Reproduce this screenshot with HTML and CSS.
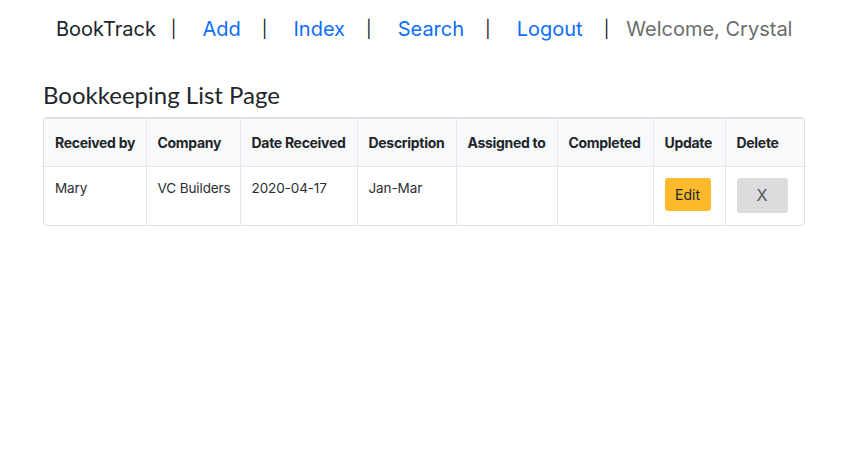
FILE: index.html
```html
<!DOCTYPE html>
<html>
<head>
<meta charset="utf-8">
<link rel="stylesheet" href="styles.css">
</head>
<body>
<nav class="nav">
  <span class="brand">BookTrack</span>
  <span class="sep sep-first">|</span>
  <a class="link" href="#">Add</a>
  <span class="sep">|</span>
  <a class="link" href="#">Index</a>
  <span class="sep">|</span>
  <a class="link" href="#">Search</a>
  <span class="sep">|</span>
  <a class="link" href="#">Logout</a>
  <span class="sep">|</span>
  <span class="welcome">Welcome, Crystal</span>
</nav>
<main class="content">
  <h1 class="title">Bookkeeping List Page</h1>
  <div class="table-wrap">
    <table class="table">
      <colgroup>
        <col class="c1"><col class="c2"><col class="c3"><col class="c4">
        <col class="c5"><col class="c6"><col class="c7"><col class="c8">
      </colgroup>
      <thead>
        <tr>
          <th>Received by</th>
          <th>Company</th>
          <th>Date Received</th>
          <th>Description</th>
          <th>Assigned to</th>
          <th>Completed</th>
          <th>Update</th>
          <th>Delete</th>
        </tr>
      </thead>
      <tbody>
        <tr>
          <td>Mary</td>
          <td>VC Builders</td>
          <td>2020-04-17</td>
          <td>Jan-Mar</td>
          <td></td>
          <td></td>
          <td class="cell-btn"><button class="btn btn-edit">Edit</button></td>
          <td class="cell-btn"><button class="btn btn-del">X</button></td>
        </tr>
      </tbody>
    </table>
  </div>
</main>
</body>
</html>
```
FILE: styles.css
```css
* { box-sizing: border-box; }
html, body { margin: 0; padding: 0; background: #fff; }
body {
  font-family: Inter, "Liberation Sans", sans-serif;
  color: #212529;
}
.nav {
  display: flex;
  align-items: center;
  height: 58px;
  padding-left: 56px;
  font-size: 20px;
  line-height: 24px;
}
.brand { color: #212529; }
.sep {
  color: #212529;
  font-size: 17px;
  margin: 0 17px 0 17px;
}
.sep-first { margin-left: 15px; }
.link { color: #0d6efd; text-decoration: none; margin: 0 4px 0 9px; }
.welcome { color: #6c6c6c; }
.content { padding: 0 61px 0 43px; }
.title {
  font-family: Lato, "Liberation Sans", sans-serif;
  font-weight: 400;
  font-size: 24px;
  line-height: 29px;
  margin: 22px 0 8px 0;
  color: #212529;
}
.table-wrap {
  border: 1px solid #dee2e6;
  border-top: 2px solid #dee2e6;
  border-radius: 4px;
  overflow: hidden;
  width: 762px;
}
.table {
  width: 100%;
  table-layout: fixed;
  border-collapse: collapse;
  font-size: 14px;
}
.table th, .table td {
  border-left: 1px solid #e3e6ea;
  text-align: left;
  vertical-align: top;
  padding: 0 11px;
  white-space: nowrap;
}
.table th:first-child, .table td:first-child { border-left: none; }
.table th {
  background: #f8f9fa;
  font-weight: 700;
  height: 47px;
  vertical-align: middle;
  border-bottom: 1px solid #e3e6ea;
  color: #212529;
  letter-spacing: -0.3px;
}
.table td {
  height: 59px;
  padding-top: 13px;
  color: #2b2f33;
  font-size: 13.5px;
  letter-spacing: -0.1px;
}
.c1 { width: 102px; }
.c2 { width: 94px; }
.c3 { width: 117px; }
.c4 { width: 99px; }
.c5 { width: 101px; }
.c6 { width: 96px; }
.c7 { width: 72px; }
.c8 { width: 79px; }
.table td.cell-btn { padding-top: 11px; }
.btn {
  font-family: Inter, "Liberation Sans", sans-serif;
  border: none;
  border-radius: 3px;
  font-size: 14px;
  color: #212529;
  cursor: pointer;
  display: block;
}
.btn-edit {
  background: #fdb92c;
  width: 46px;
  height: 33px;
  padding: 0;
}
.btn-del {
  background: #dcdcde;
  width: 51px;
  height: 35px;
  padding: 0;
  font-size: 16px;
  color: #555;
}
```
